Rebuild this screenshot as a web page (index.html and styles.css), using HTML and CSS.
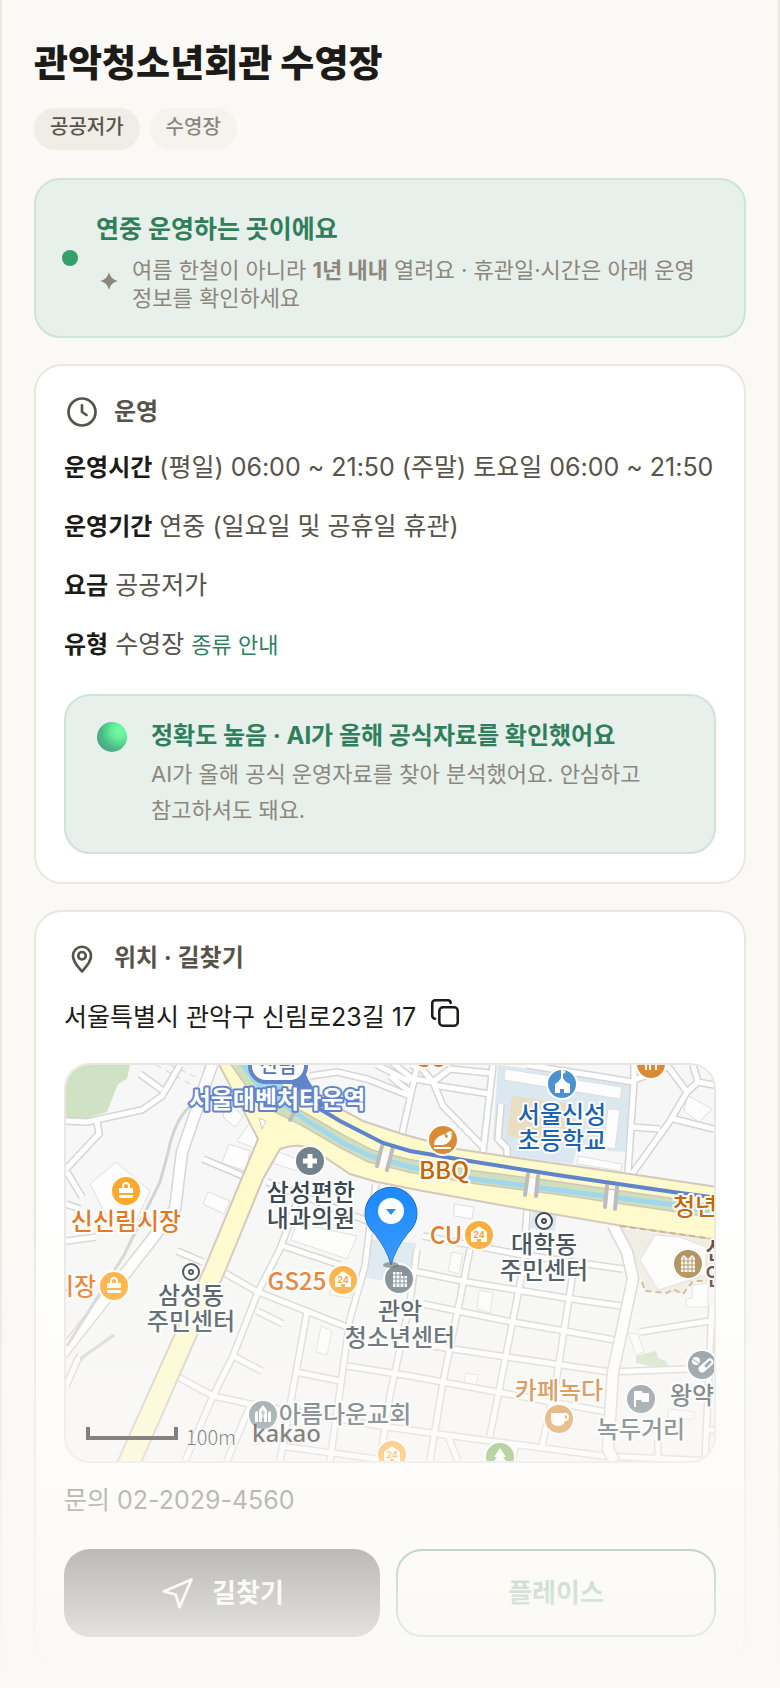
FILE: index.html
```html
<!DOCTYPE html>
<html lang="ko">
<head>
  <meta charset="UTF-8">
  <meta name="viewport" content="width=device-width, initial-scale=1.0">
  <title>관악청소년회관 수영장</title>
  <link rel="stylesheet" href="styles.css">
</head>
<body>
  <main class="page">
    <h1 class="title">관악청소년회관 수영장</h1>
    <div class="chips">
      <span class="chip chip-strong">공공저가</span>
      <span class="chip">수영장</span>
    </div>

    <section class="banner">
      <span class="dot"></span>
      <div class="banner-body">
        <h2 class="banner-title">연중 운영하는 곳이에요</h2>
        <div class="banner-note">
          <svg class="spark" viewBox="0 0 24 24" aria-hidden="true"><path d="M12 4 Q13.500 10.500 20 12 Q13.500 13.500 12 20 Q10.500 13.500 4 12 Q10.500 10.500 12 4Z"/></svg>
          <p>여름 한철이 아니라 <strong>1년 내내</strong> 열려요 · 휴관일·시간은 아래 운영 정보를 확인하세요</p>
        </div>
      </div>
    </section>

    <section class="card">
      <h2 class="card-head">
        <svg class="icon" viewBox="0 0 24 24" aria-hidden="true"><circle cx="12" cy="12" r="9"/><path d="M12 7.500V12l3 2"/></svg>
        운영
      </h2>
      <div class="rows">
        <p><strong>운영시간</strong> (평일) 06:00 ~ 21:50 (주말) 토요일 06:00 ~ 21:50</p>
        <p><strong>운영기간</strong> 연중 (일요일 및 공휴일 휴관)</p>
        <p><strong>요금</strong> 공공저가</p>
        <p><strong>유형</strong> 수영장 <a class="guide" href="#">종류 안내</a></p>
      </div>
      <div class="trust">
        <span class="orb"></span>
        <div>
          <h3 class="trust-title">정확도 높음 · AI가 올해 공식자료를 확인했어요</h3>
          <p class="trust-text">AI가 올해 공식 운영자료를 찾아 분석했어요. 안심하고 참고하셔도 돼요.</p>
        </div>
      </div>
    </section>

    <section class="card">
      <h2 class="card-head">
        <svg class="icon" viewBox="0 0 24 24" aria-hidden="true"><path d="M12 21c-1.800-2.200-6-6-6-10.500a6 6 0 0 1 12 0c0 4.500-4.200 8.300-6 10.500z"/><circle cx="12" cy="10.500" r="2.500"/></svg>
        위치 · 길찾기
      </h2>
      <div class="address">
        <span>서울특별시 관악구 신림로23길 17</span>
        <button class="copy" type="button" aria-label="주소 복사">
          <svg viewBox="0 0 24 24" aria-hidden="true"><rect x="8" y="8" width="13" height="13" rx="2.500"/><path d="M5 16a2 2 0 0 1-2-2V5a2 2 0 0 1 2-2h9a2 2 0 0 1 2 2"/></svg>
        </button>
      </div>

      <div class="map">
        <svg viewBox="0 0 648 396" role="img" aria-label="지도">
          <defs>
            <g id="streets">
              <path d="M0 56 L21 57 L76 45 L96 31 L114 0 M74 9 L96 25 M31 56 L33 69 L0 104 M1 107 L16 132 M0 139 L14 144 M0 176 L30 172"/>
              <path d="M137 94 L177 111 M111 186 L137 197 M0 321 L11 296 L15 290"/>
              <path d="M244 11 L271 7 L301 14 L344 31 M311 0 L344 17 M351 2 L336 69 M324 11 L344 27 M324 -4 L347 14 L367 17 L384 4 M345 0 L356 4 L367 17 L377 41 L416 81 M367 20 L424 29 M384 4 L424 8"/>
              <path d="M427 0 L417 87 M435 39 L432 74 L441 83 V91 M461 0 L567 17 M568 0 V16 L562 107 M568 15 L600 3 M601 0 L621 27 L604 56 L566 109 M621 27 L632 17 L648 20 M627 0 L632 17 M604 53 L648 64 M566 62 L594 64"/>
              <path d="M201 117 L304 157 M310 119 L304 161 L299 201 L284 254 L264 396 M217 181 L274 200 M157 207 L192 227 L281 262 M231 137 L214 184 L192 227 L167 291 L147 331 L119 396"/>
              <path d="M351 184 L344 237 L324 330 L314 396 M404 184 L392 244 L377 317 L364 396 M461 146 L457 204 L424 371 M506 200 L506 214 L491 311 L476 381"/>
              <path d="M357 171 L457 190 L557 204 M347 206 L401 217 L506 234 L562 242 M357 239 L441 256 L499 266 L554 276 M367 281 L434 291 L544 307 L621 304"/>
              <path d="M230 307 L274 316 M281 301 L344 311 L431 327 L541 347 M112 312 L147 331 L184 339 L321 362 L424 376 L537 391 L648 396 M214 381 L311 394 M241 247 L214 396 M184 341 L161 396 M191 246 L217 259 M169 292 L196 306 M382 371 L392 396 M450 378 L446 396 M592 375 V396"/>
              <path d="M574 267 L644 256 M646 241 L639 396 M639 365 H648"/>
            </g>
            <g id="bag"><rect x="-7" y="-3" width="14" height="10" rx="1" fill="#fff"/><path d="M-3 -3 V-5 A3 3 0 0 1 3 -5 V-3" fill="none" stroke="#fff" stroke-width="2"/><path d="M-7 3 H7" stroke="#ffa82e" stroke-width="2"/></g>
            <g id="store"><path d="M0 -9 L8 -3 V7 H2 V4 H-2 V7 H-8 V-3 Z" fill="#fff"/><text class="store-no" x="0" y="3">24</text></g>
          </defs>

          <rect width="648" height="396" fill="#f7f7f7"/>
          <path fill="#cfe2c3" d="M0 0 H64 L61 14 L52 19 L46 34 L41 47 L21 53 L0 53Z"/>
          <path fill="#dce8f0" d="M432 0 L565 17 L559 87 L511 84 L507 99 L441 91 L427 74Z M304 174 L350 178 L345 220 L296 212Z M467 146 L491 150 L489 166 L463 163Z"/>
          <path fill="#efece4" d="M554 163 L648 176 V216 H627 L617 229 L579 226 L571 200Z"/>
          <path fill="#cfe2c3" d="M570 291 L590 286 L592 293 L600 296 L603 303 L584 301 L570 298Z"/>
          <path fill="#e9ddc2" d="M446 31 L506 39 L501 77 L441 71Z"/>
          <g class="block">
            <path d="M439 4 L556 22 L554 34 L438 15Z M542 44 L554 45 L549 84 L537 82Z M512 91 L556 99 L555 106 L511 99Z"/>
            <path d="M24 119 L50 97 L84 126 L70 156 L40 150Z M163 79 L184 86 L180 106 L156 98Z M185 56 L194 60 L191 84 L171 76Z M156 41 L168 41 L177 52 L169 62 L158 53Z"/>
            <path d="M208 85 L236 96 L238 108 L206 98Z M142 127 L164 136 L158 149 L137 139Z M230 158 L291 171 L281 194 L225 175Z M388 139 L408 142 L406 154 L388 151Z M621 30 L646 44 L633 57 L618 46Z"/>
            <path d="M577 190 L589 170 L614 172 L640 182 V210 L592 225 L574 195Z M255 261 L266 266 L261 290 L250 287Z M413 225 L427 228 L424 248 L411 244Z M386 187 L397 189 L393 209 L382 206Z M400 308 L412 310 L410 321 L398 318Z M626 220 L642 218 V242 H620 V234 L626 233Z M562 268 L572 269 L578 287 L570 290 L566 278Z M603 344 L628 347 V354 L601 354Z M265 216 L286 219 L284 233 L264 230Z"/>
          </g>

          <use href="#streets" class="street-edge"/>
          <use href="#streets" class="street"/>
          <path class="wide-edge" d="M146 0 L116 87 L109 144 L84 177 L-4 289 M547 160 L561 187 L567 214 L547 307 L542 384 L548 396"/>
          <path class="wide" d="M146 0 L116 87 L109 144 L84 177 L-4 289 M547 160 L561 187 L567 214 L547 307 L542 384 L548 396"/>
          <path fill="none" stroke="#d3d3d3" stroke-width="3" d="M124 41 Q108 56 102 88 L94 117 L58 190 L1 281 M14 294 L48 270"/>
          <path fill="none" stroke="#d3d3d3" stroke-width="1" stroke-dasharray="6 5" d="M90 0 L126 20 M104 0 L134 14 M174 22 L196 34"/>

          <path fill="#fefacb" stroke="#d3c9bb" stroke-width="2" d="M151 -4 H220 L251 31 L297 56 L336 69 L391 84 L444 92 L564 109 L652 122 V175 L557 161 L457 144 L357 126 L311 117 L284 109 L251 87 Q236 76 214 84 L197 114 L161 202 L74 400 H50 L139 202 L192 74 L174 39Z"/>
          <path fill="#fff" stroke="#d3c9bb" d="M193 53 L200 56 L196 64Z"/>
          <path class="bank-edge" d="M170 -4 L197 34 L237 54 L277 77 L304 91 L344 101 L407 112 L491 123 L601 139 L652 147"/>
          <path class="bank" d="M170 -4 L197 34 L237 54 L277 77 L304 91 L344 101 L407 112 L491 123 L601 139 L652 147"/>
          <path fill="#a2d6ec" d="M171 -4 H200 L224 30 L218 44 L192 24Z"/>
          <path class="water" d="M186 0 L206 30 L237 53 L277 78 L304 91 L344 102 L407 114 L491 125 L601 139 L652 147"/>
          <path fill="none" stroke="#fafafa" stroke-width="9" d="M321 86 L317 102 M467 113 L465 128 M546 125 L544 142"/>
          <path fill="none" stroke="#bcbcbc" stroke-width="4" stroke-linecap="round" d="M229 46 L224 55 M316 81 L311 101 M327 82 L321 105 M462 109 L459 130 M472 111 L470 131 M541 121 L539 142 M551 122 L549 144"/>
          <path class="metro" d="M238 10 L254 44 L274 56 L317 78 L344 86 L397 95 L491 110 L607 127 L652 133"/>
          <path fill="#5f84cc" d="M222 16 L238 10 L262 42 L250 42Z"/>
          <path fill="none" stroke="#cdb183" stroke-width="2" stroke-dasharray="6 4" d="M554 161 L648 174 M576 217 L579 226 L601 228 L607 224 L617 229 L627 216 H641"/>

          <rect x="184" y="-20" width="56" height="37" rx="16" fill="#fff" stroke="#5f84cc" stroke-width="4"/>
          <text class="label sub" x="212" y="8">신림</text>
          <text class="label station" x="211" y="43">서울대벤처타운역</text>

          <g class="badge">
            <circle cx="60" cy="126" r="15" fill="#ffa82e"/>
            <circle cx="48" cy="221" r="15" fill="#ffa82e"/>
            <circle cx="413" cy="170" r="15" fill="#ffa82e"/>
            <circle cx="277" cy="215" r="15" fill="#ffa82e"/>
            <circle cx="326" cy="390" r="15" fill="#ffa82e"/>
            <circle cx="244" cy="96" r="15" fill="#73828b"/>
            <circle cx="377" cy="75" r="15" fill="#dc8b35"/>
            <circle cx="585" cy="-1" r="15" fill="#dc8b35"/>
            <circle cx="493" cy="354" r="15" fill="#dc8b35"/>
            <circle cx="496" cy="19" r="15" fill="#4c91d0"/>
            <circle cx="622" cy="199" r="15" fill="#aa8650"/>
            <circle cx="333" cy="214" r="15" fill="#73828b"/>
            <circle cx="197" cy="350" r="15" fill="#73828b"/>
            <circle cx="636" cy="300" r="15" fill="#73828b"/>
            <circle cx="575" cy="334" r="15" fill="#73828b"/>
            <circle cx="434" cy="392" r="15" fill="#72ad4c"/>
          </g>
          <use href="#bag" x="60" y="126"/>
          <use href="#bag" x="48" y="221"/>
          <use href="#store" x="413" y="170"/>
          <use href="#store" x="277" y="215"/>
          <use href="#store" x="326" y="390"/>
          <path stroke="#fff" stroke-width="5" d="M237 96 H251 M244 89 V103"/>
          <path fill="#fff" d="M368 80 Q368 73 376 70 L379 69 Q378 72 381 73 Q383 71 380 68 L383 67 L386 70 Q385 78 377 80Z M368 82 H385 V84 H368Z"/>
          <path fill="none" stroke="#fff" stroke-width="2" d="M381 70 Q383 66 386 68"/>
          <path fill="none" stroke="#fff" stroke-width="2" d="M580 0 V5 M584 0 V5 M590 0 V5"/>
          <path fill="#fff" d="M489 28 V19 L492 17 L496 12 L500 17 L504 19 V28 H498 V24 H494 V28Z M495 5 H497 V14 H495Z M497 5 L500 7 L497 9Z"/>
          <path fill="#fff" d="M615 207 V193 L618 190 L622 194 L626 190 L629 193 V207Z M327 207 H336 V211 H341 V222 H327Z"/>
          <path fill="none" stroke="#aa8650" d="M615 196 H629 M615 200 H629 M615 204 H629 M618 192 V207 M622 194 V207 M626 192 V207"/>
          <path fill="none" stroke="#73828b" d="M327 210 H336 M327 214 H341 M327 218 H341 M330 207 V222 M334 207 V222 M338 211 V222"/>
          <path fill="#fff" d="M193 357 V345 L197 340 L201 345 V357 H198 V353 H196 V357Z M189 348 Q191 344 192 348 V357 H189Z M202 348 Q204 344 205 348 V357 H202Z"/>
          <path stroke="#73828b" d="M197 345 V353 M195 348 H199"/>
          <circle cx="630" cy="296" r="4" fill="#fff"/>
          <path d="M626 294 L634 299" stroke="#73828b"/>
          <path d="M636 304 L644 297" stroke="#fff" stroke-width="7" stroke-linecap="round"/>
          <path d="M640 301 L644 297" stroke="#73828b" stroke-width="3" stroke-linecap="round"/>
          <path fill="#fff" d="M568 326 H576 L577 328 H583 V337 H576 L575 335 H570 V342 H568Z"/>
          <path fill="#fff" d="M485 348 H499 V354 Q499 361 492 361 Q485 361 485 354Z"/>
          <circle cx="499" cy="352" r="3" fill="none" stroke="#fff" stroke-width="2"/>
          <path fill="#fff" d="M434 383 L440 392 H437 L442 399 H426 L431 392 H428Z"/>
          <g fill="#fff" stroke="#37434b" stroke-width="2">
            <circle cx="125" cy="207" r="8"/><circle cx="478" cy="156" r="8"/>
            <circle cx="125" cy="207" r="2"/><circle cx="478" cy="156" r="2"/>
          </g>

          <g class="label orange">
            <text x="60" y="165">신신림시장</text>
            <text x="8" y="230">시장</text>
            <text x="380" y="179">CU</text>
            <text x="231" y="225">GS25</text>
            <text x="365" y="2">CU</text>
          </g>
          <g class="label brown">
            <text x="378" y="114">BBQ</text>
            <text x="629" y="150">청년</text>
            <text x="493" y="334">카페녹다</text>
          </g>
          <g class="label slate">
            <text x="245" y="136">삼성편한</text>
            <text x="245" y="162">내과의원</text>
            <text x="478" y="188">대학동</text>
            <text x="478" y="214">주민센터</text>
            <text x="125" y="239">삼성동</text>
            <text x="125" y="265">주민센터</text>
            <text x="334" y="255">관악</text>
            <text x="334" y="281">청소년센터</text>
            <text x="279" y="358">아름다운교회</text>
            <text x="626" y="339">왕약</text>
            <text x="575" y="373">녹두거리</text>
          </g>
          <g class="label school">
            <text x="496" y="58">서울신성</text>
            <text x="496" y="84">초등학교</text>
          </g>
          <g class="label cocoa">
            <text x="650" y="194">신</text>
            <text x="650" y="220">인</text>
          </g>

          <ellipse cx="325" cy="200" rx="8" ry="3" fill="#555" opacity="0.6"/>
          <path fill="#1f8bff" stroke="#1767c4" d="M325 200 Q321 184 308 168 A26 26 0 1 1 342 168 Q329 184 325 200Z"/>
          <circle cx="325" cy="146" r="13" fill="#fff"/>
          <path fill="#1f8bff" d="M320 144 H330 L325 150Z"/>

          <path fill="none" stroke="#111" stroke-width="4" d="M22 362 V373 H110 V362"/>
          <text class="scale" x="120" y="380">100m</text>
          <text class="brand" x="186" y="377">kakao</text>
        </svg>
      </div>

      <p class="phone">문의 02-2029-4560</p>
      <div class="actions">
        <button class="btn btn-primary" type="button">
          <svg viewBox="0 0 24 24" aria-hidden="true"><path d="M21 3 L2.500 11 L10.500 13 L13 21.500Z"/></svg>
          길찾기
        </button>
        <button class="btn btn-outline" type="button">플레이스</button>
      </div>
    </section>
    <div class="fade"></div>
  </main>
</body>
</html>
```

FILE: styles.css
```css
* {
  box-sizing: border-box;
}

body {
  margin: 0;
  background-color: #faf9f5;
  color: #1c1b17;
  font-family: Inter, "Noto Sans CJK KR", sans-serif;
  font-size: 25px;
  line-height: 36px;
  word-break: keep-all;
}

h1, h2, h3, p {
  margin: 0;
}

.page {
  position: relative;
  display: flex;
  flex-direction: column;
  gap: 26px;
  padding: 38px 32px 20px;
  border-left: 2px solid #e9e7e0;
  border-right: 2px solid #e9e7e0;
}

.title {
  font-size: 37px;
  line-height: 52px;
  font-weight: 800;
}

.chips {
  display: flex;
  gap: 10px;
  margin-top: -8px;
}

.chip {
  padding: 4px 16px 8px;
  border-radius: 21px;
  background-color: #f4f3ee;
  color: #8c877d;
  font-size: 20px;
  line-height: 30px;
  font-weight: 500;
}

.chip-strong {
  background-color: #efede6;
  color: #57534a;
}

.banner {
  display: flex;
  align-items: center;
  gap: 18px;
  margin-top: 2px;
  padding: 24px 26px;
  border: 2px solid #cfe4d8;
  border-radius: 26px;
  background-color: #e7f0ea;
}

.dot {
  flex: none;
  width: 16px;
  height: 16px;
  border-radius: 50%;
  background-color: #35a06b;
}

.banner-body {
  padding-top: 4px;
}

.banner-title {
  margin-bottom: 6px;
  color: #2f7f5c;
  font-size: 25px;
  line-height: 42px;
}

.banner-note {
  display: flex;
  gap: 10px;
  color: #8c877d;
  font-size: 22px;
  line-height: 28px;
}

.spark {
  flex: none;
  width: 26px;
  height: 26px;
  margin-top: 12px;
  fill: #8c877d;
}

.card {
  padding: 28px;
  border: 2px solid #e9e7e0;
  border-radius: 28px;
  background-color: #fff;
}

.card-head {
  display: flex;
  align-items: center;
  gap: 14px;
  color: #57534a;
  font-size: 24px;
  line-height: 36px;
}

.icon {
  width: 36px;
  height: 36px;
  fill: none;
  stroke: #57534a;
  stroke-width: 1.8;
  stroke-linecap: round;
  stroke-linejoin: round;
}

.rows {
  display: flex;
  flex-direction: column;
  gap: 22px;
  margin: 19px 0 31px;
  color: #57534a;
}

.rows strong {
  color: #1c1b17;
  font-size: 24px;
}

.guide {
  color: #2f7f5c;
  font-size: 22px;
  text-decoration: none;
}

.trust {
  display: flex;
  gap: 24px;
  padding: 20px 30px 24px;
  border: 2px solid #cfe4d8;
  border-radius: 26px;
  background-color: #e7f0ea;
}

.orb {
  flex: none;
  width: 30px;
  height: 30px;
  margin: 6px 0 0 1px;
  border-radius: 50%;
  background: radial-gradient(circle at 75% 30%, #6fffa5 0%, #63ee9a 25%, #4bb884 60%, #5a8e9c 100%);
}

.trust-title {
  color: #2f7f5c;
  font-size: 24px;
  line-height: 40px;
}

.trust-text {
  color: #8c877d;
  font-size: 22px;
  line-height: 36px;
}

.address {
  display: flex;
  align-items: center;
  gap: 12px;
  margin: 23px 0 28px;
}

.copy {
  display: flex;
  padding: 0 0 8px;
  border: none;
  background: none;
  color: inherit;
  cursor: pointer;
}

.copy svg {
  width: 34px;
  height: 34px;
  margin: -3px 0;
  fill: none;
  stroke: currentColor;
  stroke-width: 1.8;
  stroke-linecap: round;
}

.map {
  overflow: hidden;
  border: 2px solid #e9e7e0;
  border-radius: 26px;
}

.map svg {
  display: block;
  width: 100%;
}

.street-edge {
  fill: none;
  stroke: #d5d5d5;
  stroke-width: 8;
}

.street {
  fill: none;
  stroke: #fff;
  stroke-width: 5;
}

.wide-edge {
  fill: none;
  stroke: #d5d5d5;
  stroke-width: 13;
}

.wide {
  fill: none;
  stroke: #fff;
  stroke-width: 10;
}

.block {
  fill: #fdfdfd;
  stroke: #dedede;
}

.bank-edge {
  fill: none;
  stroke: #cfc6b8;
  stroke-width: 14;
}

.bank {
  fill: none;
  stroke: #cde0bb;
  stroke-width: 11;
}

.water {
  fill: none;
  stroke: #a2d6ec;
  stroke-width: 5;
}

.metro {
  fill: none;
  stroke: #5f84cc;
  stroke-width: 4;
}

.badge {
  stroke: #fff;
  stroke-width: 2;
}

.label {
  font-family: "Noto Sans CJK KR", sans-serif;
  font-size: 24px;
  font-weight: 500;
  text-anchor: middle;
  paint-order: stroke;
  stroke: #fff;
  stroke-width: 4;
  stroke-linejoin: round;
}

.orange {
  fill: #e5721a;
}

.brown {
  fill: #c86504;
}

.slate {
  fill: #37464f;
}

.school {
  fill: #1c63b0;
}

.cocoa {
  fill: #5b4034;
}

.station {
  fill: #fff;
  stroke: #5f84cc;
  font-weight: 700;
}

.sub {
  fill: #5577b8;
  font-size: 20px;
}

.store-no {
  fill: #f59a1c;
  font-family: Inter, sans-serif;
  font-size: 9px;
  font-weight: 700;
  text-anchor: middle;
}

.scale {
  fill: #111;
  font-family: "Noto Sans CJK KR", sans-serif;
  font-size: 20px;
  font-weight: 300;
}

.brand {
  fill: #111;
  font-family: "Noto Sans", sans-serif;
  font-size: 24px;
  font-weight: 500;
}

.phone {
  margin: 19px 0 31px;
  color: #57534a;
}

.actions {
  display: flex;
  gap: 16px;
}

.btn {
  display: flex;
  flex: 1;
  align-items: center;
  justify-content: center;
  gap: 16px;
  height: 88px;
  padding: 0;
  border: none;
  border-radius: 26px;
  font: inherit;
  font-size: 26px;
  font-weight: 700;
  cursor: pointer;
}

.btn svg {
  width: 36px;
  height: 36px;
  fill: none;
  stroke: #fff;
  stroke-width: 1.8;
  stroke-linejoin: round;
}

.btn-primary {
  background-color: #1c1b17;
  color: #fff;
}

.btn-outline {
  border: 2px solid #2f7f5c;
  background-color: #fff;
  color: #2f7f5c;
}

/* page fades out toward the bottom edge */
.fade {
  position: absolute;
  left: -2px;
  right: -2px;
  bottom: 0;
  height: 488px;
  background: linear-gradient(rgba(250, 249, 245, 0), #faf9f5);
  pointer-events: none;
}
```
